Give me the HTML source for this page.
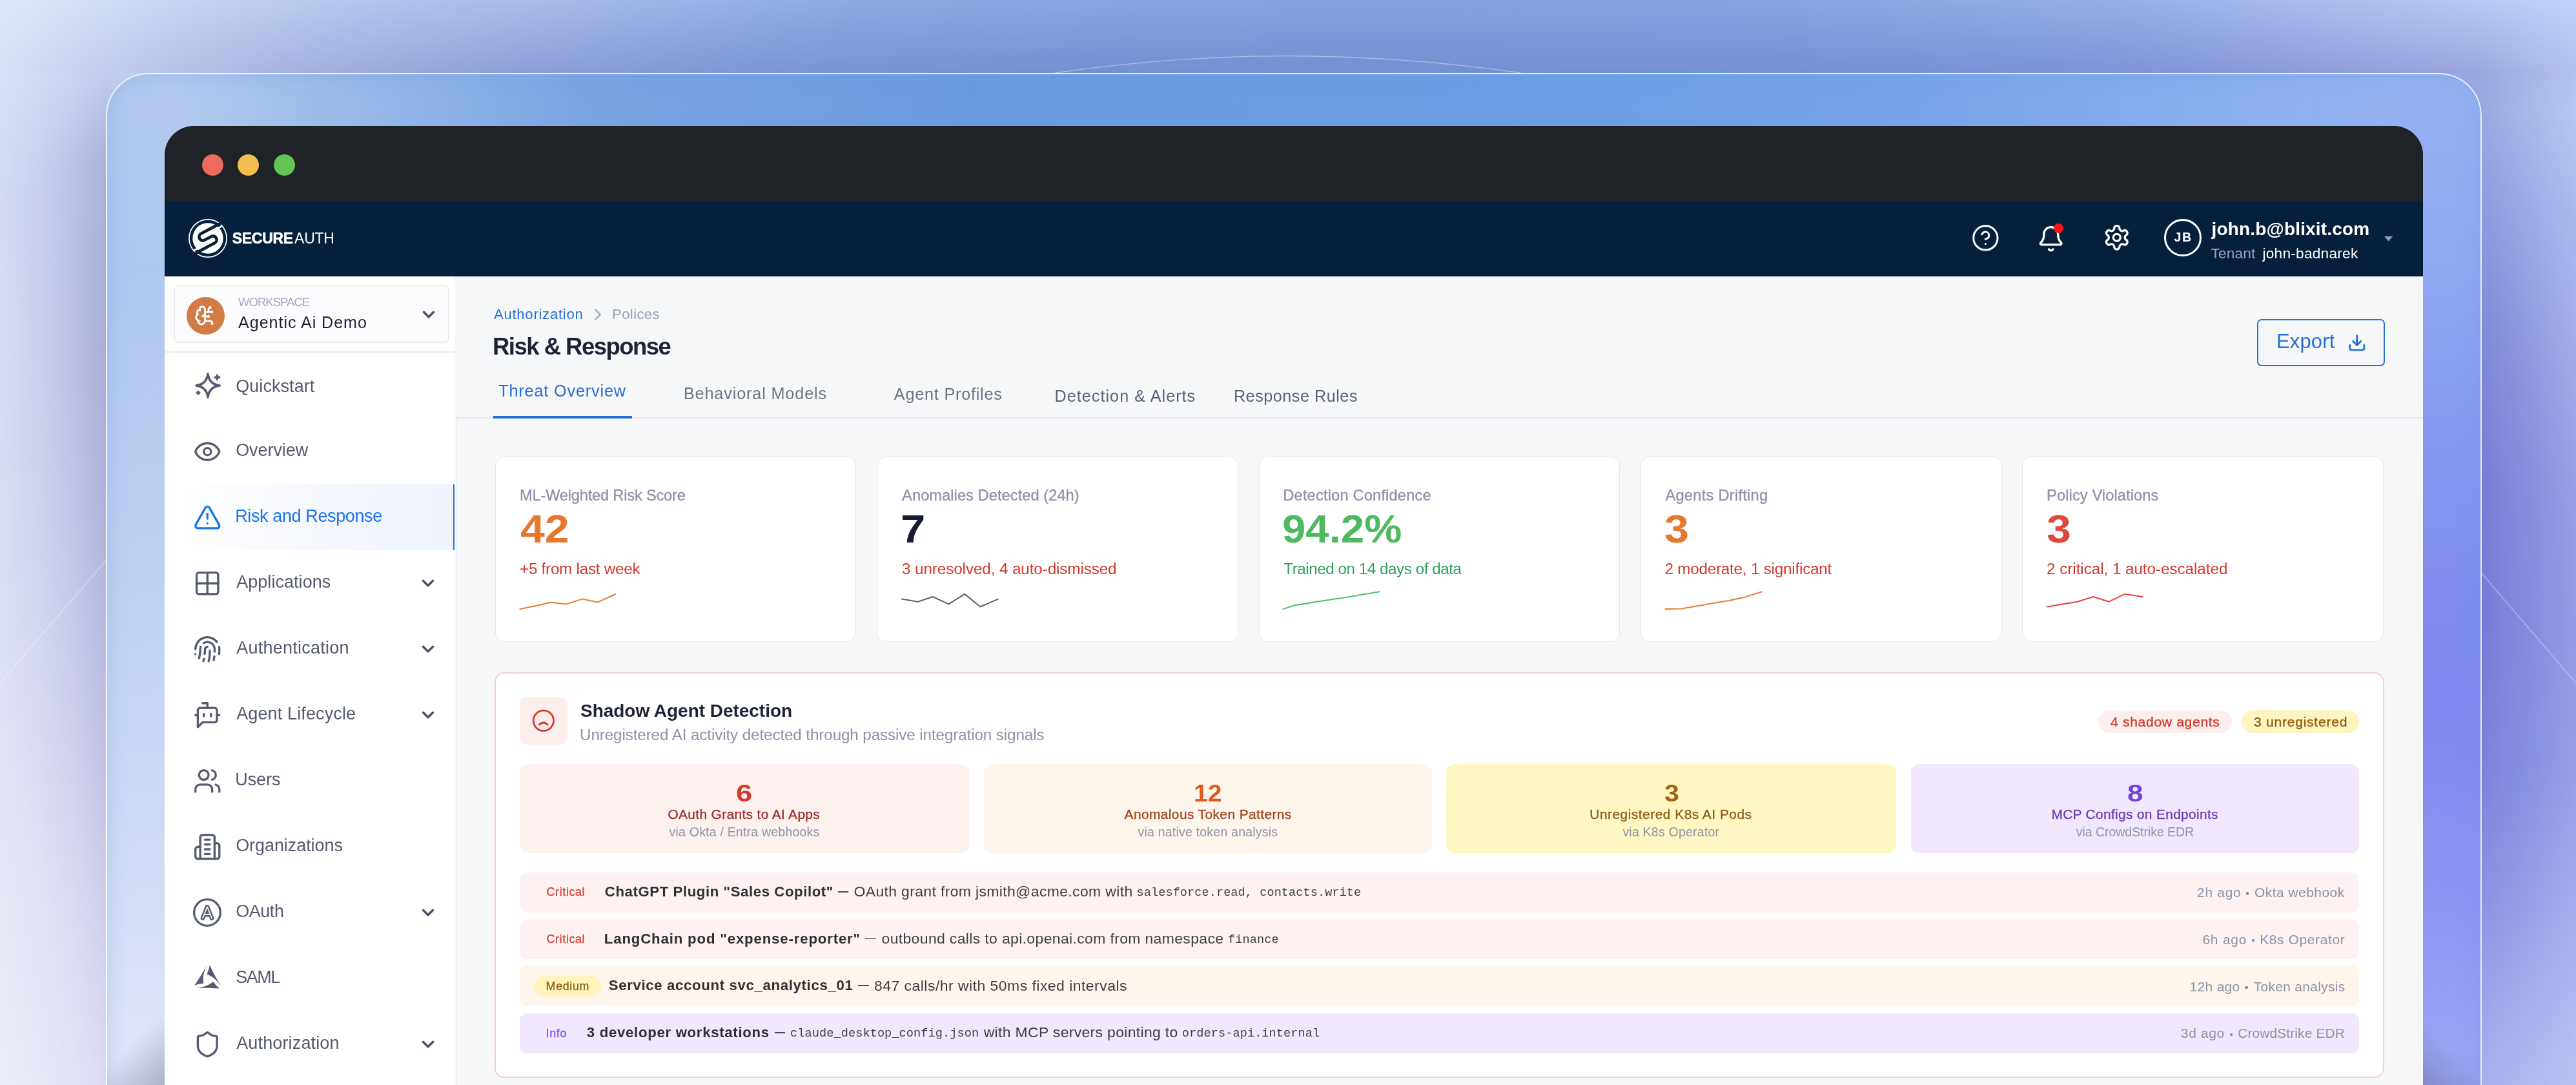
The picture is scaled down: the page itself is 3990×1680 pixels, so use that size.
<!DOCTYPE html>
<html lang="en"><head><meta charset="utf-8"><title>Risk &amp; Response</title><style>html,body{margin:0;padding:0}body{width:3990px;height:1680px;overflow:hidden;position:relative;background:#8ea9e3;font-family:"Liberation Sans",sans-serif}.a{position:absolute;display:block}.t{position:absolute;white-space:pre;line-height:1;display:block}.tx{position:absolute;left:0;top:0;width:3990px;height:1680px;will-change:transform}.win{position:absolute;left:255px;top:195px;width:3497.5px;height:1495px;border-radius:45px 45px 0 0;overflow:hidden}.in{position:absolute;left:-255px;top:-195px;width:3990px;height:1680px}</style></head><body>
<div class="a" style="left:0.00px;top:0.00px;width:3990.00px;height:260.00px;background:linear-gradient(90deg,#d6e0f5 0.00%,#c3cdec 4.11%,#b4c0e7 7.52%,#a6b2e0 11.28%,#9ba9dd 15.04%,#8ea0da 20.05%,#7e96d8 29.20%,#7592d4 38.92%,#7390d3 50.13%,#7391d6 66.67%,#8094da 82.71%,#9ba6e0 96.34%,#b5c2f0 100.00%)"></div>
<div class="a" style="left:0.00px;top:0.00px;width:3990.00px;height:260.00px;background:linear-gradient(90deg,#dde7f7 0.00%,#c5d3f0 7.52%,#aebfea 17.54%,#8ea9e3 33.33%,#86a3e1 50.13%,#86a3e1 66.67%,#97aee6 82.71%,#b0c2f0 92.73%,#c3d2f6 100.00%);-webkit-mask-image:linear-gradient(180deg,#000 0,transparent 113px);mask-image:linear-gradient(180deg,#000 0,transparent 113px)"></div>
<div class="a" style="left:0.00px;top:113.00px;width:300.00px;height:1567.00px;background:linear-gradient(180deg,#c3cdec 0.00%,#abb2dd 8.74%,#a9add9 27.25%,#b3b5de 45.76%,#bfc0e3 64.26%,#cfcfec 82.77%,#dadaf2 100.00%)"></div>
<div class="a" style="left:0.00px;top:113.00px;width:300.00px;height:1567.00px;background:linear-gradient(180deg,#d6e0f5 0.00%,#d3daf2 11.93%,#d8ddf2 45.76%,#dfe2f4 64.26%,#e8e9f7 82.77%,#edeefa 100.00%);-webkit-mask-image:linear-gradient(90deg,#000 0,rgba(0,0,0,.74) 60px,rgba(0,0,0,.42) 115px,transparent 164px);mask-image:linear-gradient(90deg,#000 0,rgba(0,0,0,.74) 60px,rgba(0,0,0,.42) 115px,transparent 164px)"></div>
<div class="a" style="left:3690.00px;top:113.00px;width:300.00px;height:1567.00px;background:linear-gradient(180deg,#9ba6e0 0.00%,#9aa8e2 3.83%,#8f9be0 13.08%,#8088d8 27.06%,#787cd6 40.97%,#777bd8 54.95%,#7c82dc 68.86%,#8e94e4 82.77%,#a5aced 96.75%,#a9b0ee 100.00%)"></div>
<div class="a" style="left:3690.00px;top:113.00px;width:300.00px;height:1567.00px;background:linear-gradient(180deg,#b5c2f0 0.00%,#b8c7f3 3.83%,#adbaee 13.08%,#a3ace9 27.06%,#999fe6 40.97%,#959be6 54.95%,#979fe8 68.86%,#a5adee 82.77%,#b7bff3 96.75%,#bac2f4 100.00%);-webkit-mask-image:linear-gradient(270deg,#000 0,transparent 146px);mask-image:linear-gradient(270deg,#000 0,transparent 146px)"></div>
<svg class="a" style="left:0;top:0" width="3990" height="1680" viewBox="0 0 3990 1680" fill="none" stroke="rgba(255,255,255,.4)" stroke-width="1.3"><path d="M1634 113 A2505 2505 0 0 1 2356 113"/><path d="M-2 1060 L164 868"/><path d="M3844 888 L3992 1060"/></svg>
<div class="a" style="left:164px;top:112.6px;width:3680px;height:1700px;border-radius:66px;overflow:hidden;box-sizing:border-box"><div class="a" style="left:0;top:0;width:100%;height:100%;background:linear-gradient(90deg,#b5cbee 0.00%,#b2c9ee 2.61%,#9bbcea 9.13%,#7aa5e4 20.00%,#6a9ce0 36.30%,#6c9fe6 63.48%,#78a5ea 77.07%,#8cb0f0 90.65%,#93b3f1 97.72%,#93b3f1 100.00%)"></div><div class="a" style="left:0;top:0;width:260px;height:100%;background:linear-gradient(180deg,#b3c9ee 0.00%,#b0c8ee 18.32%,#bdd0f1 43.84%,#cfdaf5 69.37%,#dfe3f8 88.51%,#dfe3f8 100.00%);-webkit-mask-image:linear-gradient(90deg,#000 0,#000 95px,transparent 260px);mask-image:linear-gradient(90deg,#000 0,#000 95px,transparent 260px)"></div><div class="a" style="right:0;top:0;width:260px;height:100%;background:linear-gradient(180deg,#93b3f1 0.00%,#8fa8f2 18.32%,#8594f0 37.46%,#7e88ef 56.60%,#8c97f4 75.75%,#99a3f5 88.51%,#9099e6 100.00%);-webkit-mask-image:linear-gradient(270deg,#000 0,#000 95px,transparent 260px);mask-image:linear-gradient(270deg,#000 0,#000 95px,transparent 260px)"></div><div class="a" style="left:0;top:1407.4px;width:92px;height:160px;background:linear-gradient(137deg,rgba(165,168,190,0) 54%,rgba(165,168,190,.45) 78%,rgba(160,164,186,.78) 100%)"></div><div class="a" style="right:0;top:1447.4px;width:92px;height:120px;background:linear-gradient(226deg,rgba(130,136,190,0) 52%,rgba(130,136,195,.4) 78%,rgba(125,130,185,.7) 100%)"></div><div class="a" style="left:0;top:0;width:100%;height:100%;box-sizing:border-box;border:2px solid rgba(255,255,255,.82);border-radius:66px;box-shadow:inset 0 0 30px 3px rgba(105,150,225,.26)"></div></div>
<div class="win"><div class="in">
<div class="a" style="left:255.00px;top:195.00px;width:3497.50px;height:116.00px;background:#1f2226"></div>
<div class="a" style="left:255.00px;top:311.00px;width:3497.50px;height:116.50px;background:#06203b"></div>
<div class="a" style="left:312.90px;top:239.10px;width:33.00px;height:33.00px;background:#ec6a5e;border-radius:50%"></div>
<div class="a" style="left:368.30px;top:239.10px;width:33.00px;height:33.00px;background:#f4bf4f;border-radius:50%"></div>
<div class="a" style="left:423.90px;top:239.10px;width:33.00px;height:33.00px;background:#61c454;border-radius:50%"></div>
<svg class="a" style="left:289.9px;top:337.2px" width="64" height="64" viewBox="-32 -32 64 64"><circle r="29.1" fill="none" stroke="#fff" stroke-width="1.7"/><circle r="23.7" fill="#fff"/><g transform="rotate(-28)" fill="none" stroke="#06203b" stroke-width="4.6" stroke-linecap="butt"><path d="M28.4,-11.4 L-5.9,-11.4 A5.7 5.7 0 0 0 -5.9,0 L5.9,0 A5.7 5.7 0 0 1 5.9,11.4 L-28.4,11.4"/></g><g transform="rotate(-28)" stroke="#fff" stroke-width="2.6"><path d="M19,-6.4 L29,-6.4"/><path d="M-19,6.4 L-29,6.4"/></g></svg>
<svg class="a" style="left:3052.80px;top:345.50px" width="44.8" height="44.8" viewBox="0 0 24 24" fill="none" stroke="#fff" stroke-width="1.58" stroke-linecap="round" stroke-linejoin="round" ><circle cx="12" cy="12" r="10"/><path d="M9.09 9a3 3 0 0 1 5.83 1c0 2-3 3-3 3"/><path d="M12 17h.01"/></svg>
<svg class="a" style="left:3155.15px;top:347.55px" width="43.5" height="43.5" viewBox="0 0 24 24" fill="none" stroke="#fff" stroke-width="1.85" stroke-linecap="round" stroke-linejoin="round" ><path d="M10.268 21a2 2 0 0 0 3.464 0"/><path d="M3.262 15.326A1 1 0 0 0 4 17h16a1 1 0 0 0 .74-1.673C19.41 13.956 18 12.499 18 8A6 6 0 0 0 6 8c0 4.499-1.411 5.956-2.738 7.326"/></svg>
<div class="a" style="left:3180.50px;top:345.50px;width:15.00px;height:15.00px;background:#f5171a;border-radius:50%"></div>
<svg class="a" style="left:3257.00px;top:346.10px" width="43.6" height="43.6" viewBox="0 0 24 24" fill="none" stroke="#fff" stroke-width="1.85" stroke-linecap="round" stroke-linejoin="round" ><path d="M12.22 2h-.44a2 2 0 0 0-2 2v.18a2 2 0 0 1-1 1.73l-.43.25a2 2 0 0 1-2 0l-.15-.08a2 2 0 0 0-2.73.73l-.22.38a2 2 0 0 0 .73 2.73l.15.1a2 2 0 0 1 1 1.72v.51a2 2 0 0 1-1 1.74l-.15.09a2 2 0 0 0-.73 2.73l.22.38a2 2 0 0 0 2.73.73l.15-.08a2 2 0 0 1 2 0l.43.25a2 2 0 0 1 1 1.73V20a2 2 0 0 0 2 2h.44a2 2 0 0 0 2-2v-.18a2 2 0 0 1 1-1.73l.43-.25a2 2 0 0 1 2 0l.15.08a2 2 0 0 0 2.73-.73l.22-.39a2 2 0 0 0-.73-2.73l-.15-.08a2 2 0 0 1-1-1.74v-.5a2 2 0 0 1 1-1.74l.15-.09a2 2 0 0 0 .73-2.73l-.22-.38a2 2 0 0 0-2.73-.73l-.15.08a2 2 0 0 1-2 0l-.43-.25a2 2 0 0 1-1-1.73V4a2 2 0 0 0-2-2z"/><circle cx="12" cy="12" r="3"/></svg>
<div class="a" style="left:3351.50px;top:338.60px;width:58.60px;height:58.60px;border:3px solid #fff;border-radius:50%;box-sizing:border-box"></div>
<svg class="a" style="left:3693.1px;top:365.90000000000003px" width="13.2" height="7.5" viewBox="0 0 13.2 7.5"><path d="M0 0H13.2L6.6 7.5Z" fill="#8e9bb0"/></svg>
<div class="a" style="left:255.00px;top:427.50px;width:449.00px;height:1252.50px;background:#fff"></div>
<div class="a" style="left:270.00px;top:442.00px;width:424.80px;height:88.00px;background:#fcfcfe;border:1px solid #e2e4ea;border-radius:6px;box-sizing:border-box;box-shadow:0 1px 2px rgba(40,50,80,.10)"></div>
<div class="a" style="left:289.40px;top:460.00px;width:58.20px;height:58.20px;background:#d27c45;border-radius:50%"></div>
<svg class="a" style="left:301.00px;top:472.20px" width="33" height="33" viewBox="0 0 24 24" fill="none" stroke="#fff" stroke-width="2.0" stroke-linecap="round" stroke-linejoin="round" ><path d="M12 5a3 3 0 1 0-5.997.125 4 4 0 0 0-2.526 5.77 4 4 0 0 0 .556 6.588A4 4 0 1 0 12 18Z"/><path d="M9 13a4.5 4.5 0 0 0 3-4"/><path d="M6.003 5.125A3 3 0 0 0 6.401 6.5"/><path d="M3.477 10.896a4 4 0 0 1 .585-.396"/><path d="M6 18a4 4 0 0 1-1.967-.516"/><path d="M12 13h4"/><path d="M12 18h6a2 2 0 0 1 2 2v1"/><path d="M12 8h8"/><path d="M16 8V5a2 2 0 0 1 2-2"/><circle cx="16" cy="13" r=".5"/><circle cx="18" cy="3" r=".5"/><circle cx="20" cy="21" r=".5"/><circle cx="20" cy="8" r=".5"/></svg>
<svg class="a" style="left:649.30px;top:472.30px" width="30" height="30" viewBox="0 0 24 24" fill="none" stroke="#4a5066" stroke-width="2.8" stroke-linecap="round" stroke-linejoin="round" ><path d="m6 9 6 6 6-6"/></svg>
<div class="a" style="left:255.00px;top:544.20px;width:449.00px;height:1.70px;background:#e9ebee"></div>
<div class="a" style="left:270.00px;top:749.90px;width:434.40px;height:101.70px;background:linear-gradient(90deg,#fff 0,#f7f9fe 40%,#eef3fd 100%)"></div>
<div class="a" style="left:702.00px;top:749.90px;width:2.60px;height:101.70px;background:#1a73e8"></div>
<svg class="a" style="left:298.95px;top:676.75px" width="44.5" height="44.5" viewBox="0 0 24 24" fill="none" stroke="#555a70" stroke-width="1.8" stroke-linecap="round" stroke-linejoin="round" ><path d="M2.062 12.348a1 1 0 0 1 0-.696 10.75 10.75 0 0 1 19.876 0 1 1 0 0 1 0 .696 10.75 10.75 0 0 1-19.876 0"/><circle cx="12" cy="12" r="3"/></svg>
<svg class="a" style="left:298.95px;top:778.75px" width="44.5" height="44.5" viewBox="0 0 24 24" fill="none" stroke="#1a73e8" stroke-width="1.8" stroke-linecap="round" stroke-linejoin="round" ><path d="m21.73 18-8-14a2 2 0 0 0-3.48 0l-8 14A2 2 0 0 0 4 21h16a2 2 0 0 0 1.73-3"/><path d="M12 9v4"/><path d="M12 17h.01"/></svg>
<svg class="a" style="left:298.95px;top:880.75px" width="44.5" height="44.5" viewBox="0 0 24 24" fill="none" stroke="#555a70" stroke-width="1.8" stroke-linecap="round" stroke-linejoin="round" ><rect width="18" height="18" x="3" y="3" rx="2"/><path d="M3 12h18"/><path d="M12 3v18"/></svg>
<svg class="a" style="left:648.40px;top:887.80px" width="30" height="30" viewBox="0 0 24 24" fill="none" stroke="#4a5066" stroke-width="2.8" stroke-linecap="round" stroke-linejoin="round" ><path d="m6 9 6 6 6-6"/></svg>
<svg class="a" style="left:298.95px;top:982.75px" width="44.5" height="44.5" viewBox="0 0 24 24" fill="none" stroke="#555a70" stroke-width="1.8" stroke-linecap="round" stroke-linejoin="round" ><path d="M12 10a2 2 0 0 0-2 2c0 1.02-.1 2.51-.26 4"/><path d="M14 13.12c0 2.38 0 6.38-1 8.88"/><path d="M17.29 21.02c.12-.6.43-2.3.5-3.02"/><path d="M2 12a10 10 0 0 1 18-6"/><path d="M2 16h.01"/><path d="M21.8 16c.2-2 .131-5.354 0-6"/><path d="M5 19.5C5.5 18 6 15 6 12a6 6 0 0 1 .34-2"/><path d="M8.65 22c.21-.66.45-1.32.57-2"/><path d="M9 6.8a6 6 0 0 1 9 5.2v2"/></svg>
<svg class="a" style="left:648.40px;top:989.80px" width="30" height="30" viewBox="0 0 24 24" fill="none" stroke="#4a5066" stroke-width="2.8" stroke-linecap="round" stroke-linejoin="round" ><path d="m6 9 6 6 6-6"/></svg>
<svg class="a" style="left:298.95px;top:1084.75px" width="44.5" height="44.5" viewBox="0 0 24 24" fill="none" stroke="#555a70" stroke-width="1.8" stroke-linecap="round" stroke-linejoin="round" ><path d="M12 6V2H8"/><path d="m8 18-4 4V8a2 2 0 0 1 2-2h12a2 2 0 0 1 2 2v8a2 2 0 0 1-2 2Z"/><path d="M2 12h2"/><path d="M9 11v2"/><path d="M15 11v2"/><path d="M20 12h2"/></svg>
<svg class="a" style="left:648.40px;top:1091.80px" width="30" height="30" viewBox="0 0 24 24" fill="none" stroke="#4a5066" stroke-width="2.8" stroke-linecap="round" stroke-linejoin="round" ><path d="m6 9 6 6 6-6"/></svg>
<svg class="a" style="left:298.95px;top:1186.75px" width="44.5" height="44.5" viewBox="0 0 24 24" fill="none" stroke="#555a70" stroke-width="1.8" stroke-linecap="round" stroke-linejoin="round" ><path d="M16 21v-2a4 4 0 0 0-4-4H6a4 4 0 0 0-4 4v2"/><circle cx="9" cy="7" r="4"/><path d="M22 21v-2a4 4 0 0 0-3-3.87"/><path d="M16 3.13a4 4 0 0 1 0 7.75"/></svg>
<svg class="a" style="left:298.95px;top:1288.75px" width="44.5" height="44.5" viewBox="0 0 24 24" fill="none" stroke="#555a70" stroke-width="1.8" stroke-linecap="round" stroke-linejoin="round" ><path d="M6 22V4a2 2 0 0 1 2-2h8a2 2 0 0 1 2 2v18Z"/><path d="M6 12H4a2 2 0 0 0-2 2v6a2 2 0 0 0 2 2h2"/><path d="M18 9h2a2 2 0 0 1 2 2v9a2 2 0 0 1-2 2h-2"/><path d="M10 6h4"/><path d="M10 10h4"/><path d="M10 14h4"/><path d="M10 18h4"/></svg>
<svg class="a" style="left:648.40px;top:1397.80px" width="30" height="30" viewBox="0 0 24 24" fill="none" stroke="#4a5066" stroke-width="2.8" stroke-linecap="round" stroke-linejoin="round" ><path d="m6 9 6 6 6-6"/></svg>
<svg class="a" style="left:298.95px;top:1594.75px" width="44.5" height="44.5" viewBox="0 0 24 24" fill="none" stroke="#555a70" stroke-width="1.8" stroke-linecap="round" stroke-linejoin="round" ><path d="M20 13c0 5-3.5 7.5-7.66 8.95a1 1 0 0 1-.67-.01C7.5 20.5 4 18 4 13V6a1 1 0 0 1 1-1c2 0 4.5-1.2 6.24-2.72a1.17 1.17 0 0 1 1.52 0C14.51 3.81 17 5 19 5a1 1 0 0 1 1 1z"/></svg>
<svg class="a" style="left:648.40px;top:1601.80px" width="30" height="30" viewBox="0 0 24 24" fill="none" stroke="#4a5066" stroke-width="2.8" stroke-linecap="round" stroke-linejoin="round" ><path d="m6 9 6 6 6-6"/></svg>
<svg class="a" style="left:297.5px;top:573px" width="48" height="48" viewBox="-24 -24 48 48" fill="none" stroke="#555a70" stroke-width="3.5" stroke-linecap="round" stroke-linejoin="round"><path d="M0,-18.2 Q2,-2 18.2,0 Q2,2 0,18.2 Q-2,2 -18.2,0 Q-2,-2 0,-18.2 Z"/><path d="M14.4,-16 V-9.4 M11.1,-12.7 H17.7"/><path d="M-14.9,8.4 L-12.2,11.1 L-14.9,13.8 L-17.6,11.1 Z" fill="#555a70" stroke-width="1.6"/></svg>
<svg class="a" style="left:297.1px;top:1389.0px" width="48" height="48" viewBox="-24 -24 48 48" fill="none" stroke-linecap="round" stroke-linejoin="round"><circle r="20.4" stroke="#555a70" stroke-width="3.3"/><path d="M-7.1,8.8 L0,-8.9 L7.1,8.8 M-4.4,3.2 H4.4" stroke="#555a70" stroke-width="6.6"/><path d="M-7.1,8.8 L0,-8.9 L7.1,8.8 M-4.4,3.2 H4.4" stroke="#fff" stroke-width="1.7"/></svg>
<svg class="a" style="left:295.7px;top:1491.2px" width="52" height="52" viewBox="-26 -26 52 52" fill="#555a70"><path d="M2.8,-22.4 Q9.5,-8 20,9.7 C15.5,3 9.5,-4.5 -1.6,-8.6 Q1.3,-14 2.8,-22.4 Z"/><path d="M2.8,-22.4 Q9.5,-8 20,9.7 C15.5,3 9.5,-4.5 -1.6,-8.6 Q1.3,-14 2.8,-22.4 Z" transform="rotate(120)"/><path d="M2.8,-22.4 Q9.5,-8 20,9.7 C15.5,3 9.5,-4.5 -1.6,-8.6 Q1.3,-14 2.8,-22.4 Z" transform="rotate(240)"/></svg>
<div class="a" style="left:704.00px;top:427.50px;width:3048.50px;height:1252.50px;background:#f6f7f9"></div>
<div class="a" style="left:706.50px;top:647.50px;width:1.80px;height:1032.50px;background:#e4e7ec"></div>
<div class="a" style="left:704.00px;top:647.50px;width:2.50px;height:1032.50px;background:#fbfbfd"></div>
<div class="a" style="left:706.00px;top:646.30px;width:3046.50px;height:1.80px;background:#e5e7ec"></div>
<div class="a" style="left:763.80px;top:644.20px;width:215.50px;height:3.60px;background:#1f6fd6"></div>
<svg class="a" style="left:911.40px;top:472.10px" width="30" height="30" viewBox="0 0 24 24" fill="none" stroke="#9aa1b8" stroke-width="1.7" stroke-linecap="round" stroke-linejoin="round" ><path d="m9 18 6-6-6-6"/></svg>
<div class="a" style="left:3495.70px;top:493.70px;width:198.00px;height:73.50px;border:2px solid #2673d8;border-radius:7px;box-sizing:border-box"></div>
<svg class="a" style="left:3635.65px;top:515.55px" width="29.5" height="29.5" viewBox="0 0 24 24" fill="none" stroke="#2470d6" stroke-width="2.25" stroke-linecap="round" stroke-linejoin="round" ><path d="M21 15v4a2 2 0 0 1-2 2H5a2 2 0 0 1-2-2v-4"/><path d="M7 10l5 5 5-5"/><path d="M12 15V3"/></svg>
<div class="a" style="left:766.80px;top:706.80px;width:559.70px;height:286.90px;background:#fff;border:1px solid #e3e6ed;border-radius:14px;box-sizing:border-box"></div>
<div class="a" style="left:1358.20px;top:706.80px;width:559.70px;height:286.90px;background:#fff;border:1px solid #e3e6ed;border-radius:14px;box-sizing:border-box"></div>
<div class="a" style="left:1949.60px;top:706.80px;width:559.70px;height:286.90px;background:#fff;border:1px solid #e3e6ed;border-radius:14px;box-sizing:border-box"></div>
<div class="a" style="left:2541.00px;top:706.80px;width:559.70px;height:286.90px;background:#fff;border:1px solid #e3e6ed;border-radius:14px;box-sizing:border-box"></div>
<div class="a" style="left:3132.40px;top:706.80px;width:559.70px;height:286.90px;background:#fff;border:1px solid #e3e6ed;border-radius:14px;box-sizing:border-box"></div>
<svg class="a" style="left:0;top:0" width="3990" height="1680" viewBox="0 0 3990 1680"><path d="M805.4,943.0 L830.0,938.0 L853.2,932.7 L877.4,935.4 L901.9,927.4 L926.0,932.4 L953.5,920.0" stroke="#ea7a30" stroke-width="2.0" fill="none" stroke-linejoin="round" stroke-linecap="round"/><path d="M1397.0,927.6 L1421.9,931.7 L1444.6,924.0 L1469.4,935.4 L1494.2,919.9 L1518.4,939.5 L1545.8,927.6" stroke="#5a6072" stroke-width="2.0" fill="none" stroke-linejoin="round" stroke-linecap="round"/><path d="M1987.3,943.1 L2004.0,937.5 L2036.0,932.3 L2061.0,928.6 L2086.0,924.8 L2111.0,920.6 L2136.5,916.2" stroke="#4cc25e" stroke-width="2.0" fill="none" stroke-linejoin="round" stroke-linecap="round"/><path d="M2579.4,943.1 L2604.0,942.6 L2629.0,938.2 L2653.0,934.0 L2678.0,930.0 L2703.0,924.6 L2728.7,916.2" stroke="#ea7a30" stroke-width="2.0" fill="none" stroke-linejoin="round" stroke-linecap="round"/><path d="M3170.6,939.5 L3195.0,935.5 L3217.6,931.7 L3242.4,924.0 L3266.6,931.7 L3290.9,919.9 L3318.3,924.0" stroke="#e0483e" stroke-width="2.0" fill="none" stroke-linejoin="round" stroke-linecap="round"/></svg>
<div class="a" style="left:766.30px;top:1040.60px;width:2926.80px;height:628.60px;background:#fff;border:2px solid #f9cdcd;border-radius:15px;box-sizing:border-box"></div>
<div class="a" style="left:804.70px;top:1078.90px;width:74.80px;height:74.10px;background:#fdeeee;border-radius:11px"></div>
<svg class="a" style="left:823.25px;top:1097.15px" width="37.7" height="37.7" viewBox="0 0 24 24" fill="none" stroke="#d63a2f" stroke-width="1.8" stroke-linecap="round" stroke-linejoin="round" ><circle cx="12" cy="12" r="10"/><path d="M16 16s-1.5-2-4-2-4 2-4 2"/></svg>
<div class="a" style="left:3250.30px;top:1099.50px;width:206.90px;height:35.40px;background:#fdeeee;border-radius:18px"></div>
<div class="a" style="left:3471.80px;top:1099.50px;width:182.60px;height:35.40px;background:#fdf4c0;border-radius:18px"></div>
<div class="a" style="left:804.70px;top:1183.20px;width:696.70px;height:137.50px;background:#fdf1f0;border-radius:13px"></div>
<div class="a" style="left:1523.80px;top:1183.20px;width:694.20px;height:137.50px;background:#fef5ec;border-radius:13px"></div>
<div class="a" style="left:2240.00px;top:1183.20px;width:697.00px;height:137.50px;background:#fef7c3;border-radius:13px"></div>
<div class="a" style="left:2959.50px;top:1183.20px;width:694.90px;height:137.50px;background:#f1e8fd;border-radius:13px"></div>
<div class="a" style="left:804.70px;top:1351.00px;width:2849.70px;height:61.50px;background:#fdf2f1;border-radius:11px"></div>
<div class="a" style="left:804.70px;top:1423.70px;width:2849.70px;height:61.50px;background:#fdf2f1;border-radius:11px"></div>
<div class="a" style="left:804.70px;top:1496.40px;width:2849.70px;height:61.50px;background:#fef5ec;border-radius:11px"></div>
<div class="a" style="left:804.70px;top:1569.10px;width:2849.70px;height:61.50px;background:#f1e8fd;border-radius:11px"></div>
<div class="a" style="left:827.40px;top:1511.20px;width:104.00px;height:31.40px;background:#fef4bd;border-radius:16px"></div>
<div class="a" style="left:3479.10px;top:1381.40px;width:4.40px;height:4.40px;background:#8b91a6;border-radius:1.2px"></div>
<div class="a" style="left:3487.90px;top:1454.10px;width:4.40px;height:4.40px;background:#8b91a6;border-radius:1.2px"></div>
<div class="a" style="left:3477.40px;top:1526.80px;width:4.40px;height:4.40px;background:#8b91a6;border-radius:1.2px"></div>
<div class="a" style="left:3453.90px;top:1599.50px;width:4.40px;height:4.40px;background:#8b91a6;border-radius:1.2px"></div>
<div class="a" style="left:1298.40px;top:1380.00px;width:15.70px;height:1.80px;background:#4a4b50"></div>
<div class="a" style="left:1340.30px;top:1452.70px;width:16.40px;height:1.80px;background:#4a4b50"></div>
<div class="a" style="left:1329.00px;top:1525.40px;width:16.50px;height:1.80px;background:#4a4b50"></div>
<div class="a" style="left:1199.50px;top:1598.10px;width:16.80px;height:1.80px;background:#4a4b50"></div>
<div class="tx">
<span class="t" style="left:359.70px;top:358.20px;font-size:23px;color:#fff;letter-spacing:-0.282px;font-weight:700;-webkit-text-stroke:0.6px #fff;">SECURE</span>
<span class="t" style="left:456.10px;top:358.20px;font-size:23px;color:#fff;letter-spacing:-0.300px;">AUTH</span>
<span class="t" style="left:3367.60px;top:358.40px;font-size:19.6px;color:#fff;letter-spacing:1.503px;font-weight:700;">JB</span>
<span class="t" style="left:3425.50px;top:340.90px;font-size:28px;color:#fff;letter-spacing:0.164px;font-weight:700;">john.b@blixit.com</span>
<span class="t" style="left:3424.50px;top:380.97px;font-size:22.66px;color:#9aa3b8;letter-spacing:0.154px;">Tenant</span>
<span class="t" style="left:3504.50px;top:380.97px;font-size:22.66px;color:#fff;letter-spacing:0.240px;">john-badnarek</span>
<span class="t" style="left:369.10px;top:459.33px;font-size:18.54px;color:#a3a8c0;letter-spacing:-1.004px;">WORKSPACE</span>
<span class="t" style="left:369.10px;top:486.54px;font-size:25.13px;color:#1e2333;letter-spacing:0.932px;">Agentic Ai Demo</span>
<span class="t" style="left:365.20px;top:585.05px;font-size:27px;color:#555a70;letter-spacing:0.064px;">Quickstart</span>
<span class="t" style="left:365.20px;top:684.30px;font-size:27px;color:#555a70;letter-spacing:-0.075px;">Overview</span>
<span class="t" style="left:364.20px;top:786.30px;font-size:27px;color:#1a73e8;letter-spacing:-0.382px;">Risk and Response</span>
<span class="t" style="left:366.20px;top:888.30px;font-size:27px;color:#555a70;letter-spacing:0.047px;">Applications</span>
<span class="t" style="left:366.20px;top:990.30px;font-size:27px;color:#555a70;letter-spacing:0.253px;">Authentication</span>
<span class="t" style="left:366.20px;top:1092.30px;font-size:27px;color:#555a70;letter-spacing:0.129px;">Agent Lifecycle</span>
<span class="t" style="left:364.20px;top:1194.30px;font-size:27px;color:#555a70;letter-spacing:-0.051px;">Users</span>
<span class="t" style="left:365.20px;top:1296.30px;font-size:27px;color:#555a70;letter-spacing:-0.074px;">Organizations</span>
<span class="t" style="left:365.20px;top:1398.30px;font-size:27px;color:#555a70;letter-spacing:-0.457px;">OAuth</span>
<span class="t" style="left:365.20px;top:1500.30px;font-size:27px;color:#555a70;letter-spacing:-1.503px;">SAML</span>
<span class="t" style="left:366.20px;top:1602.30px;font-size:27px;color:#555a70;letter-spacing:0.143px;">Authorization</span>
<span class="t" style="left:765.00px;top:476.33px;font-size:22.14px;color:#2470d6;letter-spacing:0.714px;">Authorization</span>
<span class="t" style="left:948.10px;top:476.33px;font-size:22.14px;color:#9ba3b8;letter-spacing:0.357px;">Polices</span>
<span class="t" style="left:763.00px;top:519.25px;font-size:36.5px;color:#1e2235;letter-spacing:-1.520px;font-weight:700;">Risk &amp; Response</span>
<span class="t" style="left:772.20px;top:593.38px;font-size:25.23px;color:#2470d6;letter-spacing:0.844px;">Threat Overview</span>
<span class="t" style="left:1058.90px;top:597.38px;font-size:25.23px;color:#6e7482;letter-spacing:0.859px;">Behavioral Models</span>
<span class="t" style="left:1384.80px;top:597.68px;font-size:25.23px;color:#6b7180;letter-spacing:0.778px;">Agent Profiles</span>
<span class="t" style="left:1633.50px;top:600.68px;font-size:25.23px;color:#5b6178;letter-spacing:1.016px;">Detection &amp; Alerts</span>
<span class="t" style="left:1910.90px;top:600.68px;font-size:25.23px;color:#5b6178;letter-spacing:0.505px;">Response Rules</span>
<span class="t" style="left:3525.90px;top:514.35px;font-size:30.9px;color:#2470d6;letter-spacing:0.221px;">Export</span>
<span class="t" style="left:805.00px;top:755.95px;font-size:23.69px;color:#8b91a7;letter-spacing:-0.222px;-webkit-text-stroke:0.3px #8b91a7;">ML-Weighted Risk Score</span>
<span class="t" style="left:806.00px;top:788.55px;font-size:60.5px;color:#e8772e;font-weight:700;transform:scaleX(1.1242);transform-origin:0 0;">42</span>
<span class="t" style="left:805.00px;top:869.29px;font-size:24.21px;color:#d4382c;letter-spacing:-0.240px;">+5 from last week</span>
<span class="t" style="left:1397.10px;top:755.95px;font-size:23.69px;color:#8b91a7;letter-spacing:0.032px;-webkit-text-stroke:0.3px #8b91a7;">Anomalies Detected (24h)</span>
<span class="t" style="left:1394.82px;top:788.55px;font-size:60.5px;color:#171c33;font-weight:700;transform:scaleX(1.1379);transform-origin:0 0;">7</span>
<span class="t" style="left:1397.10px;top:869.29px;font-size:24.21px;color:#d4382c;letter-spacing:-0.087px;">3 unresolved, 4 auto-dismissed</span>
<span class="t" style="left:1987.30px;top:755.95px;font-size:23.69px;color:#8b91a7;letter-spacing:0.152px;-webkit-text-stroke:0.3px #8b91a7;">Detection Confidence</span>
<span class="t" style="left:1986.14px;top:788.55px;font-size:60.5px;color:#4fb960;font-weight:700;transform:scaleX(1.0803);transform-origin:0 0;">94.2%</span>
<span class="t" style="left:1988.30px;top:869.29px;font-size:24.21px;color:#2f9e5b;letter-spacing:-0.455px;">Trained on 14 days of data</span>
<span class="t" style="left:2579.40px;top:755.95px;font-size:23.69px;color:#8b91a7;letter-spacing:0.244px;-webkit-text-stroke:0.3px #8b91a7;">Agents Drifting</span>
<span class="t" style="left:2578.27px;top:788.55px;font-size:60.5px;color:#e8772e;font-weight:700;transform:scaleX(1.1290);transform-origin:0 0;">3</span>
<span class="t" style="left:2578.40px;top:869.29px;font-size:24.21px;color:#d4382c;letter-spacing:-0.199px;">2 moderate, 1 significant</span>
<span class="t" style="left:3170.10px;top:755.95px;font-size:23.69px;color:#8b91a7;letter-spacing:0.075px;-webkit-text-stroke:0.3px #8b91a7;">Policy Violations</span>
<span class="t" style="left:3169.97px;top:788.55px;font-size:60.5px;color:#dc4a3d;font-weight:700;transform:scaleX(1.1290);transform-origin:0 0;">3</span>
<span class="t" style="left:3170.10px;top:869.29px;font-size:24.21px;color:#d4382c;letter-spacing:-0.034px;">2 critical, 1 auto-escalated</span>
<span class="t" style="left:899.00px;top:1087.20px;font-size:28px;color:#1e2235;letter-spacing:-0.033px;font-weight:700;">Shadow Agent Detection</span>
<span class="t" style="left:898.00px;top:1125.69px;font-size:24.21px;color:#8b92a8;letter-spacing:-0.102px;">Unregistered AI activity detected through passive integration signals</span>
<span class="t" style="left:3269.10px;top:1107.44px;font-size:21.12px;color:#cf3a2e;letter-spacing:0.653px;-webkit-text-stroke:0.35px #cf3a2e;">4 shadow agents</span>
<span class="t" style="left:3490.90px;top:1107.44px;font-size:21.12px;color:#8f5a0e;letter-spacing:0.737px;-webkit-text-stroke:0.35px #8f5a0e;">3 unregistered</span>
<span class="t" style="left:1140.44px;top:1210.50px;font-size:36px;color:#d2392c;font-weight:700;transform:scaleX(1.2611);transform-origin:0 0;">6</span>
<span class="t" style="left:1034.45px;top:1250.94px;font-size:20.91px;color:#9b2c24;letter-spacing:0.344px;-webkit-text-stroke:0.3px #9b2c24;">OAuth Grants to AI Apps</span>
<span class="t" style="left:1036.55px;top:1279.01px;font-size:19.57px;color:#8d93a8;letter-spacing:0.185px;">via Okta / Entra webhooks</span>
<span class="t" style="left:1848.57px;top:1210.50px;font-size:36px;color:#e05a1e;font-weight:700;transform:scaleX(1.0886);transform-origin:0 0;">12</span>
<span class="t" style="left:1741.55px;top:1250.94px;font-size:20.91px;color:#a0421a;letter-spacing:0.404px;-webkit-text-stroke:0.3px #a0421a;">Anomalous Token Patterns</span>
<span class="t" style="left:1762.50px;top:1279.01px;font-size:19.57px;color:#8d93a8;letter-spacing:0.189px;">via native token analysis</span>
<span class="t" style="left:2577.65px;top:1210.50px;font-size:36px;color:#a5610f;font-weight:700;transform:scaleX(1.1421);transform-origin:0 0;">3</span>
<span class="t" style="left:2462.30px;top:1250.94px;font-size:20.91px;color:#8a5a1a;letter-spacing:0.492px;-webkit-text-stroke:0.3px #8a5a1a;">Unregistered K8s AI Pods</span>
<span class="t" style="left:2513.40px;top:1279.01px;font-size:19.57px;color:#8d93a8;letter-spacing:0.195px;">via K8s Operator</span>
<span class="t" style="left:3294.67px;top:1210.50px;font-size:36px;color:#7341e0;font-weight:700;transform:scaleX(1.2278);transform-origin:0 0;">8</span>
<span class="t" style="left:3177.45px;top:1250.94px;font-size:20.91px;color:#6b3ab5;letter-spacing:0.324px;-webkit-text-stroke:0.3px #6b3ab5;">MCP Configs on Endpoints</span>
<span class="t" style="left:3215.80px;top:1279.01px;font-size:19.57px;color:#8d93a8;letter-spacing:-0.071px;">via CrowdStrike EDR</span>
<span class="t" style="left:846.60px;top:1373.49px;font-size:17.82px;color:#d94035;letter-spacing:0.647px;-webkit-text-stroke:0.3px #d94035;">Critical</span>
<span class="t" style="left:846.60px;top:1446.19px;font-size:17.82px;color:#d94035;letter-spacing:0.647px;-webkit-text-stroke:0.3px #d94035;">Critical</span>
<span class="t" style="left:845.60px;top:1518.89px;font-size:17.82px;color:#8f5d10;letter-spacing:0.697px;-webkit-text-stroke:0.3px #8f5d10;">Medium</span>
<span class="t" style="left:845.60px;top:1591.59px;font-size:17.82px;color:#7c4dff;letter-spacing:0.665px;-webkit-text-stroke:0.3px #7c4dff;">Info</span>
<span class="t" style="left:936.80px;top:1370.00px;font-size:22.2px;color:#2e2f33;letter-spacing:0.583px;font-weight:700;">ChatGPT Plugin "Sales Copilot"</span>
<span class="t" style="left:1322.50px;top:1369.12px;font-size:22.97px;color:#3d3e42;letter-spacing:0.352px;">OAuth grant from jsmith@acme.com with</span>
<span class="t" style="left:1760.60px;top:1373.80px;font-size:18.6px;color:#3d3e42;letter-spacing:0.055px;font-family:'Liberation Mono', monospace;">salesforce.read, contacts.write</span>
<span class="t" style="left:935.80px;top:1442.70px;font-size:22.2px;color:#2e2f33;letter-spacing:0.851px;font-weight:700;">LangChain pod "expense-reporter"</span>
<span class="t" style="left:1365.50px;top:1441.82px;font-size:22.97px;color:#3d3e42;letter-spacing:0.354px;">outbound calls to api.openai.com from namespace</span>
<span class="t" style="left:1902.00px;top:1446.50px;font-size:18.6px;color:#3d3e42;letter-spacing:0.075px;font-family:'Liberation Mono', monospace;">finance</span>
<span class="t" style="left:942.70px;top:1515.40px;font-size:22.2px;color:#2e2f33;letter-spacing:0.656px;font-weight:700;">Service account svc_analytics_01</span>
<span class="t" style="left:1354.00px;top:1514.52px;font-size:22.97px;color:#3d3e42;letter-spacing:0.472px;">847 calls/hr with 50ms fixed intervals</span>
<span class="t" style="left:908.80px;top:1588.10px;font-size:22.2px;color:#2e2f33;letter-spacing:0.696px;font-weight:700;">3 developer workstations</span>
<span class="t" style="left:1224.00px;top:1591.90px;font-size:18.6px;color:#3d3e42;letter-spacing:0.082px;font-family:'Liberation Mono', monospace;">claude_desktop_config.json</span>
<span class="t" style="left:1523.70px;top:1587.22px;font-size:22.97px;color:#3d3e42;letter-spacing:0.324px;">with MCP servers pointing to</span>
<span class="t" style="left:1830.80px;top:1591.90px;font-size:18.6px;color:#3d3e42;letter-spacing:0.075px;font-family:'Liberation Mono', monospace;">orders-api.internal</span>
<span class="t" style="left:3403.10px;top:1372.24px;font-size:20.91px;color:#8b91a6;letter-spacing:0.717px;">2h ago</span>
<span class="t" style="left:3492.00px;top:1372.24px;font-size:20.91px;color:#8b91a6;letter-spacing:0.501px;">Okta webhook</span>
<span class="t" style="left:3411.40px;top:1444.94px;font-size:20.91px;color:#8b91a6;letter-spacing:0.817px;">6h ago</span>
<span class="t" style="left:3500.20px;top:1444.94px;font-size:20.91px;color:#8b91a6;letter-spacing:0.648px;">K8s Operator</span>
<span class="t" style="left:3391.50px;top:1517.64px;font-size:20.91px;color:#8b91a6;letter-spacing:0.359px;">12h ago</span>
<span class="t" style="left:3490.70px;top:1517.64px;font-size:20.91px;color:#8b91a6;letter-spacing:0.333px;">Token analysis</span>
<span class="t" style="left:3377.90px;top:1590.35px;font-size:20.91px;color:#8b91a6;letter-spacing:0.657px;">3d ago</span>
<span class="t" style="left:3466.20px;top:1590.35px;font-size:20.91px;color:#8b91a6;letter-spacing:0.128px;">CrowdStrike EDR</span>
</div>
</div></div>
</body></html>
